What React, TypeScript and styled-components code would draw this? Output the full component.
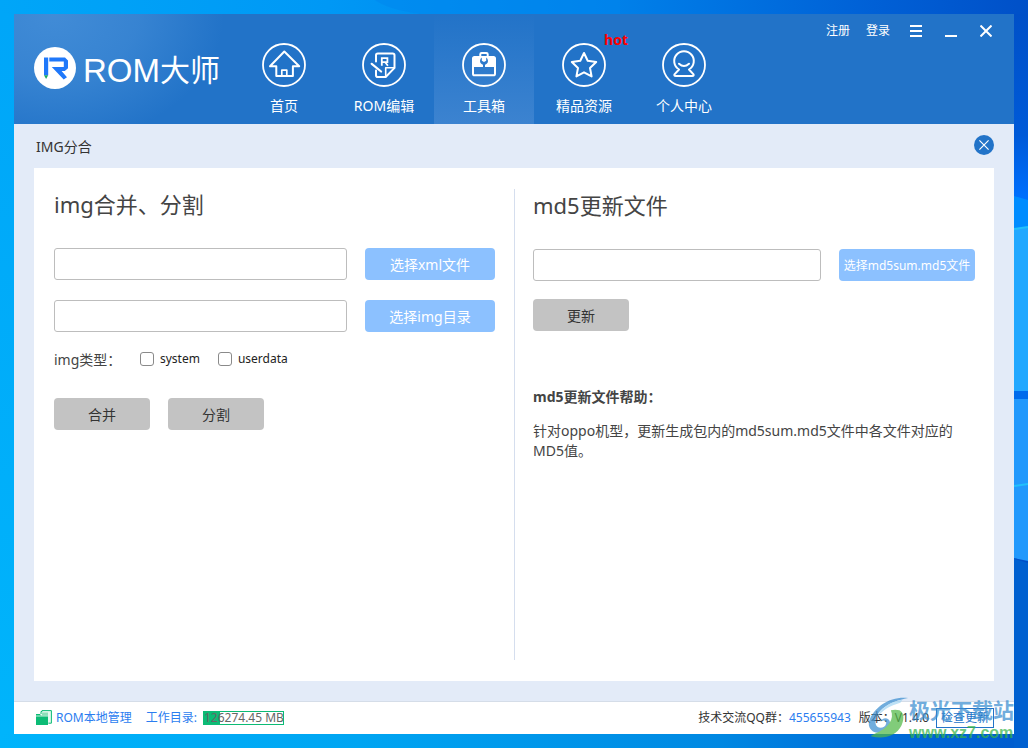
import React from 'react';
import styled, { createGlobalStyle, css } from 'styled-components';

const GlobalStyle = createGlobalStyle`
  *, *::before, *::after { box-sizing: border-box; }
  body {
    margin: 0;
    font-family: "Noto Sans", "Noto Sans CJK SC", sans-serif;
    font-size: 14px;
    line-height: 20px;
    color: #444;
  }
  h1, h2, h3, p { margin: 0; }
  button, input { font-family: inherit; }
  button { cursor: pointer; }
  a { text-decoration: none; }
`;

const Desktop = styled.div`
  position: relative;
  min-height: 100vh;
  padding: 14px;
  display: flex;
  overflow: hidden;
`;

const Wallpaper = styled.svg`
  position: absolute;
  inset: 0;
  width: 100%;
  height: 100%;
`;

const Window = styled.div`
  position: relative;
  flex: 1;
  min-width: 0;
  display: flex;
  flex-direction: column;
  background: #e3ebf8;
`;

const Header = styled.header`
  display: flex;
  align-items: stretch;
  background:
    radial-gradient(ellipse 170px 130px at 40px 0, rgba(86, 156, 224, 0.6), rgba(86, 156, 224, 0.4) 50%, rgba(86, 156, 224, 0)),
    #2273c8;
  color: #fff;
`;

const Brand = styled.div`
  width: 220px;
  padding: 0 0 2px 20px;
  display: flex;
  align-items: center;
  gap: 7px;
  flex-shrink: 0;
`;

const BrandName = styled.h1`
  display: flex;
  align-items: center;
  padding-top: 5px;
  font-family: "Liberation Sans", "Noto Sans CJK SC", sans-serif;
  font-size: 33px;
  font-weight: 400;
  line-height: 36px;
  white-space: nowrap;
`;

const BrandHan = styled.span`
  font-size: 30px;
`;

const Nav = styled.nav`
  display: flex;
`;

const NavItem = styled.a<{ $active?: boolean }>`
  position: relative;
  width: 100px;
  padding: 29px 0 8px;
  display: flex;
  flex-direction: column;
  align-items: center;
  gap: 9px;
  color: #fff;
  white-space: nowrap;
  ${(p) => p.$active && css`background: linear-gradient(#2273c8, #3c83d0);`}
`;

const HotBadge = styled.span`
  position: absolute;
  top: 16px;
  right: 6px;
  color: #f00;
  font-weight: 700;
`;

const WindowTools = styled.div`
  margin-left: auto;
  padding: 7px 18px 0 0;
  display: flex;
  align-items: center;
  align-self: flex-start;
`;

const ToolLink = styled.a`
  margin-right: 16px;
  font-size: 12px;
  color: #fff;
  white-space: nowrap;
`;

const ToolButton = styled.button`
  width: 20px;
  height: 20px;
  margin-left: 15px;
  padding: 0;
  border: 0;
  background: none;
  color: #fff;
  display: grid;
  place-items: center;
  &:first-of-type { margin-left: 0; }
`;

const PageBar = styled.div`
  height: 44px;
  padding: 0 20px 0 22px;
  display: flex;
  align-items: center;
  justify-content: space-between;
  color: #333;
`;

const PageTitle = styled.h2`
  padding-top: 2px;
  font-size: 14px;
  font-weight: 400;
  line-height: 20px;
`;

const ClosePage = styled.button`
  width: 20px;
  height: 20px;
  margin-bottom: 2px;
  padding: 0;
  border: 0;
  border-radius: 50%;
  background: #2273c8;
  color: #fff;
  display: grid;
  place-items: center;
`;

const Card = styled.main`
  flex: 1;
  margin: 0 20px 20px;
  padding: 21px 0;
  display: grid;
  grid-template-columns: 1fr 1fr;
  background: #fff;
`;

const Panel = styled.section<{ $divided?: boolean }>`
  min-width: 0;
  padding: 0 19px 0 20px;
  ${(p) => p.$divided && css`
    padding: 1px 19px 0 18px;
    border-left: 1px solid #d5deee;
  `}
`;

const PanelTitle = styled.h2`
  margin-bottom: 29px;
  font-size: 22px;
  font-weight: 400;
  line-height: 30px;
`;

const FieldRow = styled.div`
  display: flex;
  gap: 18px;
  margin-bottom: 20px;
`;

const TextField = styled.input`
  flex: 1;
  min-width: 0;
  height: 32px;
  padding: 0 8px;
  border: 1px solid #bdbdbd;
  border-radius: 3px;
  background: #fff;
  font-size: 14px;
`;

const PickButton = styled.button<{ $compact?: boolean }>`
  width: ${(p) => (p.$compact ? 136 : 130)}px;
  height: 32px;
  padding: 0;
  border: 0;
  border-radius: 4px;
  background: #8cc1ff;
  color: #fff;
  font-size: ${(p) => (p.$compact ? 12 : 14)}px;
  white-space: nowrap;
`;

const TypeRow = styled.fieldset`
  display: flex;
  align-items: center;
  margin: -2px 0 28px;
  padding: 0;
  border: 0;
`;

const TypeLabel = styled.span`
  width: 86px;
`;

const CheckLabel = styled.label`
  display: flex;
  align-items: center;
  gap: 6px;
  margin-right: 18px;
  padding-bottom: 2px;
  font-size: 12px;
  line-height: 18px;
  color: #222;
`;

const CheckBox = styled.input`
  appearance: none;
  width: 14px;
  height: 14px;
  margin: 0;
  border: 1px solid #8a8a8a;
  border-radius: 3px;
  background: #fff;
  &:checked { background: #2273c8; }
`;

const Actions = styled.div`
  display: flex;
  gap: 18px;
`;

const ActionButton = styled.button`
  width: 96px;
  height: 32px;
  padding: 0;
  border: 0;
  border-radius: 4px;
  background: #c3c3c3;
  color: #333;
  font-size: 14px;
`;

const UpdateBlock = styled.div`
  margin: -2px 0 56px;
`;

const HelpTitle = styled.h3`
  margin-bottom: 14px;
  font-size: 14px;
  line-height: 20px;
`;

const Footer = styled.footer`
  height: 33px;
  padding: 0 20px 0 22px;
  border-top: 1px solid #d5dde8;
  display: flex;
  align-items: center;
  background: #fff;
  color: #333;
  font-size: 12px;
  white-space: nowrap;
`;

const FooterLink = styled.a`
  display: flex;
  align-items: center;
  gap: 4px;
  margin-right: 14px;
  color: #2b7df0;
`;

const DiskLabel = styled.span`
  margin-right: 6px;
  color: #2b7df0;
`;

const DiskMeter = styled.div`
  width: 81px;
  height: 14px;
  border: 1px solid #0cbb75;
  background: linear-gradient(to right, #0cbb75 16px, #fff 16px);
  color: #666;
  line-height: 12px;
  overflow: hidden;
`;

const FooterRight = styled.div`
  margin-left: auto;
  display: flex;
  align-items: center;
`;

const GroupNumber = styled.span`
  margin-right: 8px;
  color: #2b7df0;
`;

const UpdateCheck = styled.button`
  width: 58px;
  height: 20px;
  margin-left: 7px;
  padding: 0;
  border: 1px solid #2273c8;
  background: #fff;
  color: #2273c8;
  font-size: 12px;
  line-height: 18px;
`;

const SiteMark = styled.div`
  position: absolute;
  right: 0;
  bottom: -10px;
  width: 147px;
  height: 48px;
  display: flex;
  overflow: hidden;
  opacity: 0.72;
  pointer-events: none;
  white-space: nowrap;
`;

const SiteMarkText = styled.div`
  font-family: "Liberation Sans", "Noto Sans CJK SC", sans-serif;
  font-weight: 700;
`;

const SiteMarkName = styled.div`
  color: #3b8ed0;
  font-size: 21px;
  line-height: 30px;
`;

const SiteMarkUrl = styled.div`
  color: #35b54a;
  font-size: 16px;
  line-height: 14px;
`;

const NavIcon = ({ children }: { children: React.ReactNode }) => (
  <svg width="44" height="44" viewBox="0 0 44 44" fill="none" stroke="#fff" strokeWidth="2" strokeLinejoin="round" strokeLinecap="round" aria-hidden="true">
    <circle cx="22" cy="22" r="21" strokeWidth="1.8" />
    {children}
  </svg>
);

const HomeIcon = () => (
  <NavIcon>
    <path d="M22.3 8.5 8 23.3h6.3V33h16.6v-9.7h6.3z" />
    <path d="M19.8 32.5v-5.3h5v5.3" strokeWidth="1.7" />
  </NavIcon>
);

const EditIcon = () => (
  <NavIcon>
    <path d="M14 18.5v-6.2q0-1.8 1.8-1.8h14.9q1.8 0 1.8 1.8v12.6L23.7 34h-7.9Q14 34 14 32.2v-4.7" />
    <path d="M23.7 33.5v-8.7h8.5" strokeWidth="1.6" />
    <path d="m9.7 20.8 9.4 7.7" strokeWidth="2.2" />
    <path d="M19.8 22.7v-7.6h5.6v4h-5.2m3 .2 2.7 3.4" strokeWidth="1.8" strokeLinejoin="miter" strokeLinecap="butt" />
  </NavIcon>
);

const ToolboxIcon = () => (
  <NavIcon>
    <path d="M18.3 12.8v-1.5q0-1.3 1.3-1.3h4.8q1.3 0 1.3 1.3v1.5" />
    <path d="M12.5 13.3h19l2 2V24h-23v-8.7z" fill="#fff" stroke="none" />
    <rect x="11" y="14" width="22" height="18.3" rx="1.6" />
    <path d="M19.8 14.6a4 4 0 1 0 4.4 0v3.2l-2.2 1.2-2.2-1.2z" fill="#2d79cb" stroke="none" />
    <path d="M22 20v4" stroke="#2d79cb" strokeLinecap="butt" />
  </NavIcon>
);

const StarIcon = () => (
  <NavIcon>
    <path d="m22 10 3.7 7.8 8.5 1.2-6.2 6 1.6 8.4-7.6-4.1-7.6 4.1L16 25l-6.2-6 8.5-1.2z" />
  </NavIcon>
);

const PersonIcon = () => (
  <NavIcon>
    <path d="M17 26.5a9.8 9.8 0 1 1 10 0l4.3 4.6q1.2 1.9-1.2 2H13.9q-2.4-.1-1.2-2z" />
    <path d="M17 20.7q5 4.6 10 0" />
  </NavIcon>
);

const LogoMark = () => (
  <svg width="42" height="42" viewBox="0 0 42 42" aria-hidden="true">
    <circle cx="21" cy="21" r="21" fill="#fff" />
    <path d="M10 10.5h4.2v17.8H10z" fill="#1f78fa" />
    <path d="M10 28.3h4.2L12.1 32z" fill="#19a861" />
    <path d="M15.3 10.5H31l3 3v7.8L30.8 24h-3.2l5.4 6.3-3.3 2.3-11.9-12.5h12V14.4H15.3z" fill="#1f78fa" />
  </svg>
);

const CrossIcon = ({ size, weight }: { size: number; weight: number }) => (
  <svg width={size} height={size} viewBox="0 0 12 12" stroke="currentColor" strokeWidth={weight} aria-hidden="true">
    <path d="m.5.5 11 11m0-11-11 11" />
  </svg>
);

const FilesIcon = () => (
  <svg width="16" height="16" viewBox="0 0 16 16" aria-hidden="true">
    <path d="M5 4V1.5h1V.6h9.4v12.6h-3" fill="#e5f8ef" stroke="#0cbb75" />
    <path d="M6 2.5h6v3H6z" fill="#8edfb9" />
    <path d="M0 4h4l1 1.5h7V15H0z" fill="#0cbb75" />
    <path d="M0 6h12" stroke="#c9f1df" />
  </svg>
);

const DesktopWallpaper = () => (
  <Wallpaper viewBox="0 0 1028 748" preserveAspectRatio="none" aria-hidden="true">
    <defs>
      <linearGradient id="sky" x1="0" y1="0" x2="1" y2="0">
        <stop offset="0" stopColor="#00a6f8" />
        <stop offset="0.32" stopColor="#0098f5" />
        <stop offset="0.6" stopColor="#0080e9" />
        <stop offset="0.85" stopColor="#0060d6" />
        <stop offset="1" stopColor="#0050c8" />
      </linearGradient>
      <linearGradient id="side" x1="0" y1="0" x2="0" y2="1">
        <stop offset="0" stopColor="#00a6f8" />
        <stop offset="1" stopColor="#00b4fb" />
      </linearGradient>
      <linearGradient id="floor" x1="0" y1="0" x2="1" y2="0">
        <stop offset="0" stopColor="#00b4fb" />
        <stop offset="0.35" stopColor="#00a5f2" />
        <stop offset="0.7" stopColor="#0088e2" />
        <stop offset="0.85" stopColor="#006cd8" />
        <stop offset="1" stopColor="#005cce" />
      </linearGradient>
      <linearGradient id="glow" x1="0" y1="0" x2="0" y2="1">
        <stop offset="0" stopColor="#0050c8" />
        <stop offset="0.65" stopColor="#005ad8" />
        <stop offset="1" stopColor="#0070ff" />
      </linearGradient>
    </defs>
    <path d="M0 0h1028v748H0z" fill="url(#sky)" />
    <path d="M0 14h14v720H0z" fill="url(#side)" />
    <path d="M0 734h1028v14H0z" fill="url(#floor)" />
    <path d="M375 0q12 9 45 14h200V0z" fill="#0086ee" opacity="0.5" />
    <path d="M1014 14h14v186h-14z" fill="url(#glow)" />
    <path d="M1014 196l14 4v28h-14z" fill="#008cff" />
    <path d="M1014 229l14-2v165h-14z" fill="#22a8ff" />
    <path d="M1014 391h14v8h-14z" fill="#006cec" />
    <path d="M1014 399h14v162l-14-3z" fill="#2299fc" />
    <path d="M1014 229l14-2M1014 486l14-2" stroke="#22c0fc" strokeWidth="2" />
    <path d="M1014 559l14 4v185h-14z" fill="#0060d0" />
  </Wallpaper>
);

const navItems = [
  { label: '首页', icon: <HomeIcon /> },
  { label: 'ROM编辑', icon: <EditIcon /> },
  { label: '工具箱', icon: <ToolboxIcon />, active: true },
  { label: '精品资源', icon: <StarIcon />, hot: true },
  { label: '个人中心', icon: <PersonIcon /> },
];

export default function App() {
  return (
    <>
      <GlobalStyle />
      <Desktop>
        <DesktopWallpaper />
        <Window>
          <Header>
            <Brand>
              <LogoMark />
              <BrandName>ROM<BrandHan>大师</BrandHan></BrandName>
            </Brand>
            <Nav>
              {navItems.map((item) => (
                <NavItem key={item.label} href="#" $active={item.active}>
                  {item.icon}
                  {item.label}
                  {item.hot && <HotBadge>hot</HotBadge>}
                </NavItem>
              ))}
            </Nav>
            <WindowTools>
              <ToolLink href="#">注册</ToolLink>
              <ToolLink href="#">登录</ToolLink>
              <ToolButton aria-label="菜单">
                <svg width="12" height="12" viewBox="0 0 12 12" fill="#fff" aria-hidden="true">
                  <path d="M0 0h12v2H0zM0 5h12v2H0zM0 10h12v2H0z" />
                </svg>
              </ToolButton>
              <ToolButton aria-label="最小化">
                <svg width="12" height="12" viewBox="0 0 12 12" fill="#fff" aria-hidden="true">
                  <path d="M0 10h12v2H0z" />
                </svg>
              </ToolButton>
              <ToolButton aria-label="关闭">
                <CrossIcon size={12} weight={2} />
              </ToolButton>
            </WindowTools>
          </Header>

          <PageBar>
            <PageTitle>IMG分合</PageTitle>
            <ClosePage aria-label="返回"><CrossIcon size={10} weight={1.4} /></ClosePage>
          </PageBar>

          <Card>
            <Panel>
              <PanelTitle>img合并、分割</PanelTitle>
              <FieldRow>
                <TextField aria-label="xml文件" />
                <PickButton>选择xml文件</PickButton>
              </FieldRow>
              <FieldRow>
                <TextField aria-label="img目录" />
                <PickButton>选择img目录</PickButton>
              </FieldRow>
              <TypeRow aria-label="img类型">
                <TypeLabel>img类型：</TypeLabel>
                <CheckLabel><CheckBox type="checkbox" />system</CheckLabel>
                <CheckLabel><CheckBox type="checkbox" />userdata</CheckLabel>
              </TypeRow>
              <Actions>
                <ActionButton>合并</ActionButton>
                <ActionButton>分割</ActionButton>
              </Actions>
            </Panel>

            <Panel $divided>
              <PanelTitle>md5更新文件</PanelTitle>
              <FieldRow>
                <TextField aria-label="md5sum.md5文件" />
                <PickButton $compact>选择md5sum.md5文件</PickButton>
              </FieldRow>
              <UpdateBlock>
                <ActionButton>更新</ActionButton>
              </UpdateBlock>
              <HelpTitle>md5更新文件帮助：</HelpTitle>
              <p>针对oppo机型，更新生成包内的md5sum.md5文件中各文件对应的MD5值。</p>
            </Panel>
          </Card>

          <Footer>
            <FooterLink href="#"><FilesIcon />ROM本地管理</FooterLink>
            <DiskLabel>工作目录:</DiskLabel>
            <DiskMeter>126274.45 MB</DiskMeter>
            <FooterRight>
              技术交流QQ群：<GroupNumber>455655943</GroupNumber>
              版本：V1.4.0
              <UpdateCheck>检查更新</UpdateCheck>
            </FooterRight>
          </Footer>

          <SiteMark>
            <svg width="44" height="44" viewBox="0 0 44 44" aria-hidden="true">
              <path d="M43 1C24-1 9 10 3 23c-4 9 3 16 11 14 7-1 11-7 10-11-1-5-8-5-10 0 3-3 7-1 6 2-1 5-10 6-11 0C8 15 22 5 43 1z" fill="#3b8ed0" />
              <path d="M25 14c4 9-2 19-18 25-2 1-3 2-3 2 14 4 27-1 32-11 4-8 2-14-2-16-3-1-6-1-9 0z" fill="#52b948" />
              <path d="M37 3C24 5 14 12 10 22c6-8 14-13 25-16z" fill="#a4d6f3" />
            </svg>
            <SiteMarkText>
              <SiteMarkName>极光下载站</SiteMarkName>
              <SiteMarkUrl>www.xz7.com</SiteMarkUrl>
            </SiteMarkText>
          </SiteMark>
        </Window>
      </Desktop>
    </>
  );
}
